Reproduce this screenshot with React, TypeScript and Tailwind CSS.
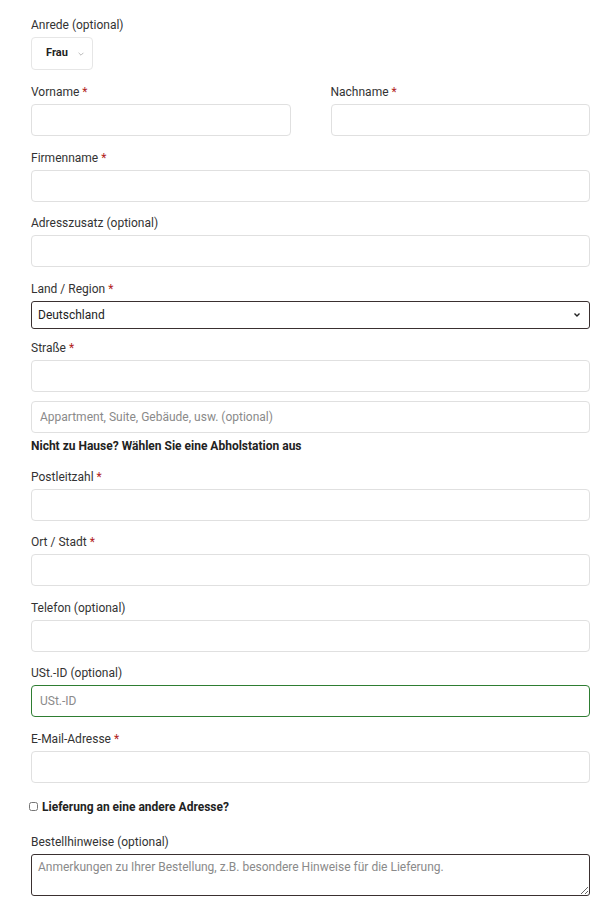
import React from "react";

const inputCls =
  "block h-8 w-full rounded-[4px] border border-[#e0e0e0] bg-white px-2 text-[12px] text-[#333] outline-none placeholder:text-[#8a8a8a]";

function Label({ text, required, optional }: { text: string; required?: boolean; optional?: boolean }) {
  return (
    <label className="mb-1 block h-[18px] text-[12px] leading-[20px] text-[#333]">
      {text}
      {optional && " (optional)"}
      {required && <span className="text-[#b22222]"> *</span>}
    </label>
  );
}

function Field({
  label,
  required,
  optional,
  placeholder,
  className = "",
  inputClass = "",
}: {
  label: string;
  required?: boolean;
  optional?: boolean;
  placeholder?: string;
  className?: string;
  inputClass?: string;
}) {
  return (
    <div className={`mb-[11.5px] ${className}`}>
      <Label text={label} required={required} optional={optional} />
      <input className={`${inputCls} ${inputClass}`} placeholder={placeholder} />
    </div>
  );
}

export default function App() {
  return (
    <div className="min-h-[910px] bg-white pl-[31px] pr-[12px] pt-[15px] font-['Roboto',sans-serif] text-[#333]">
      <div className="mb-3">
        <Label text="Anrede" optional />
        <div className="flex h-[33px] w-[62px] items-center justify-between rounded-[4px] border border-[#e6e6e6] pl-[14px] pr-[7px]">
          <span className="text-[11px] font-bold text-[#222]">Frau</span>
          <svg width="8" height="8" viewBox="0 0 10 10" className="text-[#aaa]">
            <path d="M2 3.5 L5 6.5 L8 3.5" fill="none" stroke="currentColor" strokeWidth="1" />
          </svg>
        </div>
      </div>

      <div className="flex gap-10">
        <Field label="Vorname" required className="w-[260px]" />
        <Field label="Nachname" required className="w-[260px]" />
      </div>

      <Field label="Firmenname" required />
      <Field label="Adresszusatz" optional />

      <div className="mb-[9px]">
        <Label text="Land / Region" required />
        <div className="flex h-7 w-full items-center justify-between rounded-[3px] border border-[#3a3030] pl-[6px] pr-[7px]">
          <span className="text-[12px] text-[#222]">Deutschland</span>
          <svg width="10" height="10" viewBox="0 0 10 10" className="text-[#222]">
            <path d="M2.5 3.5 L5 6 L7.5 3.5" fill="none" stroke="currentColor" strokeWidth="1.4" />
          </svg>
        </div>
      </div>

      <div className="mb-[4px]">
        <Label text="Straße" required />
        <input className={inputCls} />
        <input
          className={`${inputCls} mt-[9px]`}
          placeholder="Appartment, Suite, Gebäude, usw. (optional)"
        />
      </div>

      <div className="mb-3 h-[18px] text-[12px] font-bold leading-[18px] text-[#222]">
        Nicht zu Hause? Wählen Sie eine Abholstation aus
      </div>

      <Field label="Postleitzahl" required />
      <Field label="Ort / Stadt" required />
      <Field label="Telefon" optional />
      <Field label="USt.-ID" optional placeholder="USt.-ID" inputClass="!border-[#2e7d32]" />
      <Field label="E-Mail-Adresse" required />

      <div className="-ml-[2px] mt-[15px] flex h-[18px] items-center gap-[4px]">
        <input type="checkbox" className="h-[9px] w-[9px] accent-[#555]" />
        <span className="text-[12px] font-bold text-[#222]">Lieferung an eine andere Adresse?</span>
      </div>

      <div className="mt-[16.5px]">
        <Label text="Bestellhinweise" optional />
        <textarea
          className="block h-[42px] w-full resize-y rounded-[3px] border border-[#3a3030] px-[6px] py-[3px] text-[12px] leading-[18px] outline-none placeholder:text-[#8a8a8a]"
          placeholder="Anmerkungen zu Ihrer Bestellung, z.B. besondere Hinweise für die Lieferung."
        />
      </div>
    </div>
  );
}
